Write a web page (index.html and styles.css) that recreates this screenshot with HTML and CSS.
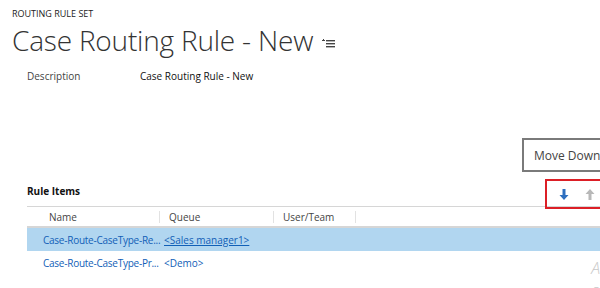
FILE: index.html
```html
<!DOCTYPE html>
<html lang="en">
<head>
  <meta charset="UTF-8" />
  <title>Case Routing Rule - New</title>
  <link rel="stylesheet" href="styles.css">
</head>
<body>
  <div class="page">
    <!-- Cabecalho -->
    <div class="header">
      <div class="entity">ROUTING RULE SET</div>
      <h1 class="title">Case Routing Rule - New <span class="menu-icon"><svg width="13" height="9" viewBox="0 0 13 9"><rect x="0" y="1" width="3" height="1" fill="#444"/><rect x="1" y="0" width="1" height="2" fill="#444"/><rect x="4" y="1" width="9" height="1.4" fill="#444"/><rect x="4" y="4" width="9" height="1.4" fill="#444"/><rect x="4" y="7" width="9" height="1.4" fill="#444"/></svg></span></h1>
    </div>

    <div class="field">
      <span class="label">Description</span>
      <span class="value">Case Routing Rule - New</span>
    </div>

    <div class="toolbar">
      <button class="move-btn">Move Down</button>
    </div>

    <div class="section">
      <div class="section-head">
        <span class="section-title">Rule Items</span>
        <div class="arrows">
          <svg width="10" height="11" viewBox="0 0 10 11"><path d="M3.5 0h3v6h3l-4.5 5l-4.5-5h3z" fill="#2e6fbf"/></svg>
          <svg width="10" height="11" viewBox="0 0 10 11"><path d="M3.5 11h3v-6h3l-4.5-5l-4.5 5h3z" fill="#b8b8b8"/></svg>
        </div>
      </div>

      <div class="grid">
        <div class="grid-row grid-header">
          <div class="col col-name">Name</div>
          <div class="col col-queue">Queue</div>
          <div class="col col-user">User/Team</div>
          <div class="col col-rest"></div>
        </div>
        <div class="grid-row item selected">
          <div class="col col-name"><a>Case-Route-CaseType-Re...</a></div>
          <div class="col col-queue"><a class="u">&lt;Sales manager1&gt;</a></div>
          <div class="col col-user"></div>
          <div class="col col-rest"></div>
        </div>
        <div class="grid-row item">
          <div class="col col-name"><a>Case-Route-CaseType-Pr...</a></div>
          <div class="col col-queue"><a>&lt;Demo&gt;</a></div>
          <div class="col col-user"></div>
          <div class="col col-rest"><span class="ghost">A<br>c</span></div>
        </div>
      </div>
    </div>
  </div>
</body>
</html>
```

FILE: styles.css
```css
body {
  margin: 0;
  font-family: "Open Sans", "Noto Sans", sans-serif;
  color: #222;
  background: #fff;
  overflow: hidden;
}

.page {
  width: 600px;
  height: 288px;
  overflow: hidden;
}

.header {
  padding: 8px 0 0 12px;
}

.entity {
  font-size: 9px;
  color: #222;
  line-height: 11px;
}

.title {
  margin: 0;
  font-weight: 300;
  font-size: 28px;
  line-height: 36px;
  color: #333;
  letter-spacing: -0.2px;
}

.menu-icon {
  display: inline-block;
  vertical-align: 3px;
  margin-left: 2px;
}

.field {
  display: flex;
  padding: 11px 0 0 27px;
  font-size: 10px;
  line-height: 14px;
}

.label {
  width: 113px;
  color: #444;
}

.value {
  color: #111;
}

.toolbar {
  display: flex;
  justify-content: flex-end;
  padding-top: 55px;
}

.move-btn {
  font-family: inherit;
  font-size: 12px;
  color: #444;
  background: #fff;
  border: 2px solid #7a7a7a;
  height: 34px;
  width: 90px;
  padding: 0 0 0 10px;
  margin-right: -12px;
  text-align: left;
}

.section {
  padding-left: 27px;
}

.section-head {
  display: flex;
  justify-content: space-between;
  align-items: center;
  margin-top: 4px;
  height: 30px;
  border-bottom: 1px solid #d6d6d6;
}

.section-title {
  font-size: 10px;
  font-weight: bold;
  color: #111;
}

.arrows {
  display: flex;
  gap: 16px;
  align-items: center;
  border: 2px solid #dc1f26;
  border-right: none;
  height: 26px;
  padding: 0 0 0 12px;
  width: 41px;
  margin-bottom: -6px;
}

.grid-row {
  display: flex;
  font-size: 10px;
}

.grid-header {
  height: 19px;
  align-items: center;
  color: #444;
  border-bottom: 2px solid #d6d6d6;
}

.grid-header .col {
  border-right: 1px solid #e2e2e2;
  height: 12px;
  line-height: 12px;
}

.grid-header .col-rest {
  border-right: none;
}

.col-name {
  width: 133px;
  padding-left: 16px;
  box-sizing: border-box;
  white-space: nowrap;
}

.col-queue {
  width: 114px;
  padding-left: 9px;
  box-sizing: border-box;
}

.col-user {
  width: 82px;
  padding-left: 9px;
  box-sizing: border-box;
}

.col-rest {
  flex: 1;
  position: relative;
}

.grid-header .col-name {
  padding-left: 22px;
}

.item {
  height: 23px;
  align-items: center;
}

.item .col-name {
  letter-spacing: -0.25px;
}

.item .col-queue {
  padding-left: 4px;
}

.item a {
  color: #1160b7;
}

.item a.u {
  text-decoration: underline;
}

.selected {
  background: #b1d6f0;
}

.ghost {
  position: absolute;
  right: 0;
  top: -6px;
  font-size: 16px;
  font-style: italic;
  font-weight: 300;
  color: #c8c8c8;
  line-height: 22px;
}
```
